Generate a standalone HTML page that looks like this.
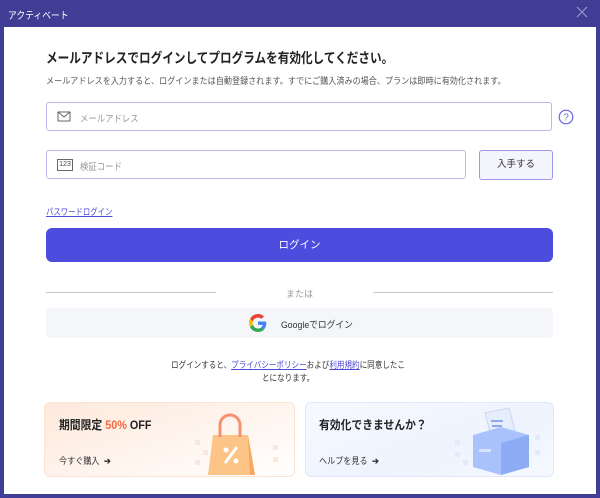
<!DOCTYPE html>
<html><head><meta charset="utf-8"><style>
*{margin:0;padding:0;box-sizing:border-box}
body{width:600px;height:498px;background:#403d95;font-family:"Liberation Sans","Noto Sans CJK JP",sans-serif;position:relative;overflow:hidden;color:#222}
.a{position:absolute;white-space:nowrap}
.s{transform-origin:0 0}
.main{left:4px;top:27px;width:592px;height:467px;background:#fff}
.inp{border:1px solid #bdb7f0;border-radius:3px;background:#fff}
.ph{font-size:9.5px;color:#999}
.card{border-radius:6px}
</style></head><body>
<div class="a s" style="left:8px;top:7px;font-size:10px;color:#fff;transform:scaleX(.88)">アクティベート</div>
<svg class="a" style="left:575px;top:5px" width="14" height="14"><path d="M2 2L12 12M12 2L2 12" stroke="#9a98cf" stroke-width="1.2"/></svg>
<div class="a main"></div>
<div class="a s" style="left:46px;top:48px;font-size:14px;font-weight:bold;color:#222;transform:scaleX(.83)">メールアドレスでログインしてプログラムを有効化してください。</div>
<div class="a s" style="left:46px;top:74px;font-size:9px;color:#555;transform:scaleX(.9)">メールアドレスを入力すると、ログインまたは自動登録されます。すでにご購入済みの場合、プランは即時に有効化されます。</div>
<div class="a inp" style="left:46px;top:102px;width:506px;height:29px"></div>
<svg class="a" style="left:57px;top:111px" width="14" height="11"><rect x="1" y="1" width="12" height="9" fill="none" stroke="#666" stroke-width="1"/><path d="M1 1L7 6L13 1" fill="none" stroke="#666"/></svg>
<div class="a ph s" style="left:80px;top:111px;transform:scaleX(.88)">メールアドレス</div>
<svg class="a" style="left:558px;top:109px" width="16" height="16"><circle cx="8" cy="8" r="6.8" fill="none" stroke="#6a66e0" stroke-width="1.2"/><text x="8" y="11.5" font-size="10" text-anchor="middle" fill="#6a66e0" font-family="Liberation Sans">?</text></svg>
<div class="a inp" style="left:46px;top:150px;width:420px;height:29px"></div>
<div class="a" style="left:57px;top:159px;width:16px;height:12px;border:1px solid #666;font-size:7px;line-height:10px;text-align:center;color:#444">123</div>
<div class="a ph s" style="left:80px;top:159px;transform:scaleX(.88)">検証コード</div>
<div class="a" style="left:479px;top:150px;width:74px;height:30px;border:1px solid #9d98e8;border-radius:3px;background:#f4f4fc;font-size:9.5px;text-align:center;line-height:28px;color:#333">入手する</div>
<div class="a s" style="left:46px;top:205px;font-size:9px;color:#4d4ad8;text-decoration:underline;transform:scaleX(.82)">パスワードログイン</div>
<div class="a" style="left:46px;top:228px;width:507px;height:34px;background:#4c4ddf;border-radius:6px;color:#fff;font-size:10.5px;text-align:center;line-height:34px">ログイン</div>
<div class="a" style="left:46px;top:292px;width:170px;height:1px;background:#c8c8c8"></div>
<div class="a" style="left:373px;top:292px;width:180px;height:1px;background:#c8c8c8"></div>
<div class="a" style="left:286px;top:287px;font-size:9px;color:#999">または</div>
<div class="a" style="left:46px;top:308px;width:507px;height:30px;background:#f4f6fa;border-radius:3px"></div>
<svg class="a" style="left:249px;top:314px" width="18" height="18" viewBox="0 0 48 48"><path fill="#EA4335" d="M24 9.5c3.5 0 6.6 1.2 9.1 3.6l6.8-6.8C35.8 2.4 30.3 0 24 0 14.6 0 6.6 5.4 2.7 13.3l7.9 6.2C12.5 13.7 17.8 9.5 24 9.5z"/><path fill="#4285F4" d="M46.1 24.5c0-1.6-.1-3.1-.4-4.5H24v9h12.4c-.5 2.9-2.2 5.3-4.6 7l7.5 5.8c4.4-4 6.8-10 6.8-17.3z"/><path fill="#FBBC05" d="M10.5 28.6c-.5-1.4-.8-3-.8-4.6s.3-3.2.8-4.6l-7.9-6.2C1 16.5 0 20.1 0 24s1 7.5 2.7 10.8l7.8-6.2z"/><path fill="#34A853" d="M24 48c6.5 0 11.9-2.1 15.9-5.8l-7.5-5.8c-2.2 1.5-5 2.3-8.4 2.3-6.2 0-11.5-4.2-13.4-9.9l-7.9 6.2C6.6 42.6 14.6 48 24 48z"/></svg>
<div class="a s" style="left:281px;top:317px;font-size:9.5px;color:#333;transform:scaleX(.92)">Googleでログイン</div>
<div class="a s" style="left:171px;top:358px;font-size:9px;color:#333;transform:scaleX(.84)">ログインすると、<span style="color:#4d4ad8;text-decoration:underline">プライバシーポリシー</span>および<span style="color:#4d4ad8;text-decoration:underline">利用規約</span>に同意したこ</div>
<div class="a s" style="left:262px;top:371px;font-size:9px;color:#333;transform:scaleX(.84)">とになります。</div>
<div class="a card" style="left:44px;top:402px;width:251px;height:75px;border:1px solid #fde3d4;background:linear-gradient(160deg,#fde9dc,#fff6f0 60%,#fff)"></div>
<div class="a s" style="left:59px;top:416px;font-size:12px;font-weight:bold;transform:scaleX(.9)">期間限定 <span style="color:#f4683f">50%</span> OFF</div>
<div class="a s" style="left:59px;top:454px;font-size:9px;color:#333;transform:scaleX(.9)">今すぐ購入 &nbsp;<b>➔</b></div>
<svg class="a" style="left:195px;top:405px" width="90" height="70"><g fill="#fbe7dc"><rect x="0" y="35" width="5" height="5"/><rect x="8" y="45" width="5" height="5"/><rect x="0" y="55" width="5" height="5"/><rect x="78" y="40" width="5" height="5"/><rect x="78" y="52" width="5" height="5"/></g><path d="M18 30h35l7 40H13z" fill="#fcc486"/><path d="M53 30l7 40h-5z" fill="#f9a75e"/><path d="M25 32v-12a10 10 0 0 1 20 0v12" fill="none" stroke="#f59170" stroke-width="3"/><path d="M30 58l12-16" stroke="#fff" stroke-width="3"/><circle cx="31" cy="45" r="2.5" fill="#fff"/><circle cx="41" cy="56" r="2.5" fill="#fff"/></svg>
<div class="a card" style="left:305px;top:402px;width:249px;height:75px;border:1px solid #e0e8fb;background:linear-gradient(160deg,#f7f9fe,#eef3fe 60%,#f6f9ff)"></div>
<div class="a s" style="left:319px;top:416px;font-size:12px;font-weight:bold;transform:scaleX(.9)">有効化できませんか？</div>
<div class="a s" style="left:319px;top:454px;font-size:9px;color:#333;transform:scaleX(.9)">ヘルプを見る &nbsp;<b>➔</b></div>
<svg class="a" style="left:455px;top:405px" width="95" height="70"><g fill="#e3ebfb"><rect x="0" y="35" width="5" height="5"/><rect x="0" y="47" width="5" height="5"/><rect x="8" y="55" width="5" height="5"/><rect x="80" y="30" width="5" height="5"/><rect x="80" y="45" width="5" height="5"/></g><path d="M30 8l24-5 8 30-24 5z" fill="#e6edfb" stroke="#c9d6f4"/><path d="M36 16h12M37 21h10" stroke="#8fa8ea" stroke-width="2"/><path d="M18 30l28-8 28 8v32l-28 8-28-8z" fill="#a9c2fb"/><path d="M46 38l28-8v32l-28 8z" fill="#8eabf5"/><rect x="24" y="44" width="12" height="3" fill="#d7e2fd"/></svg>
</body></html>
